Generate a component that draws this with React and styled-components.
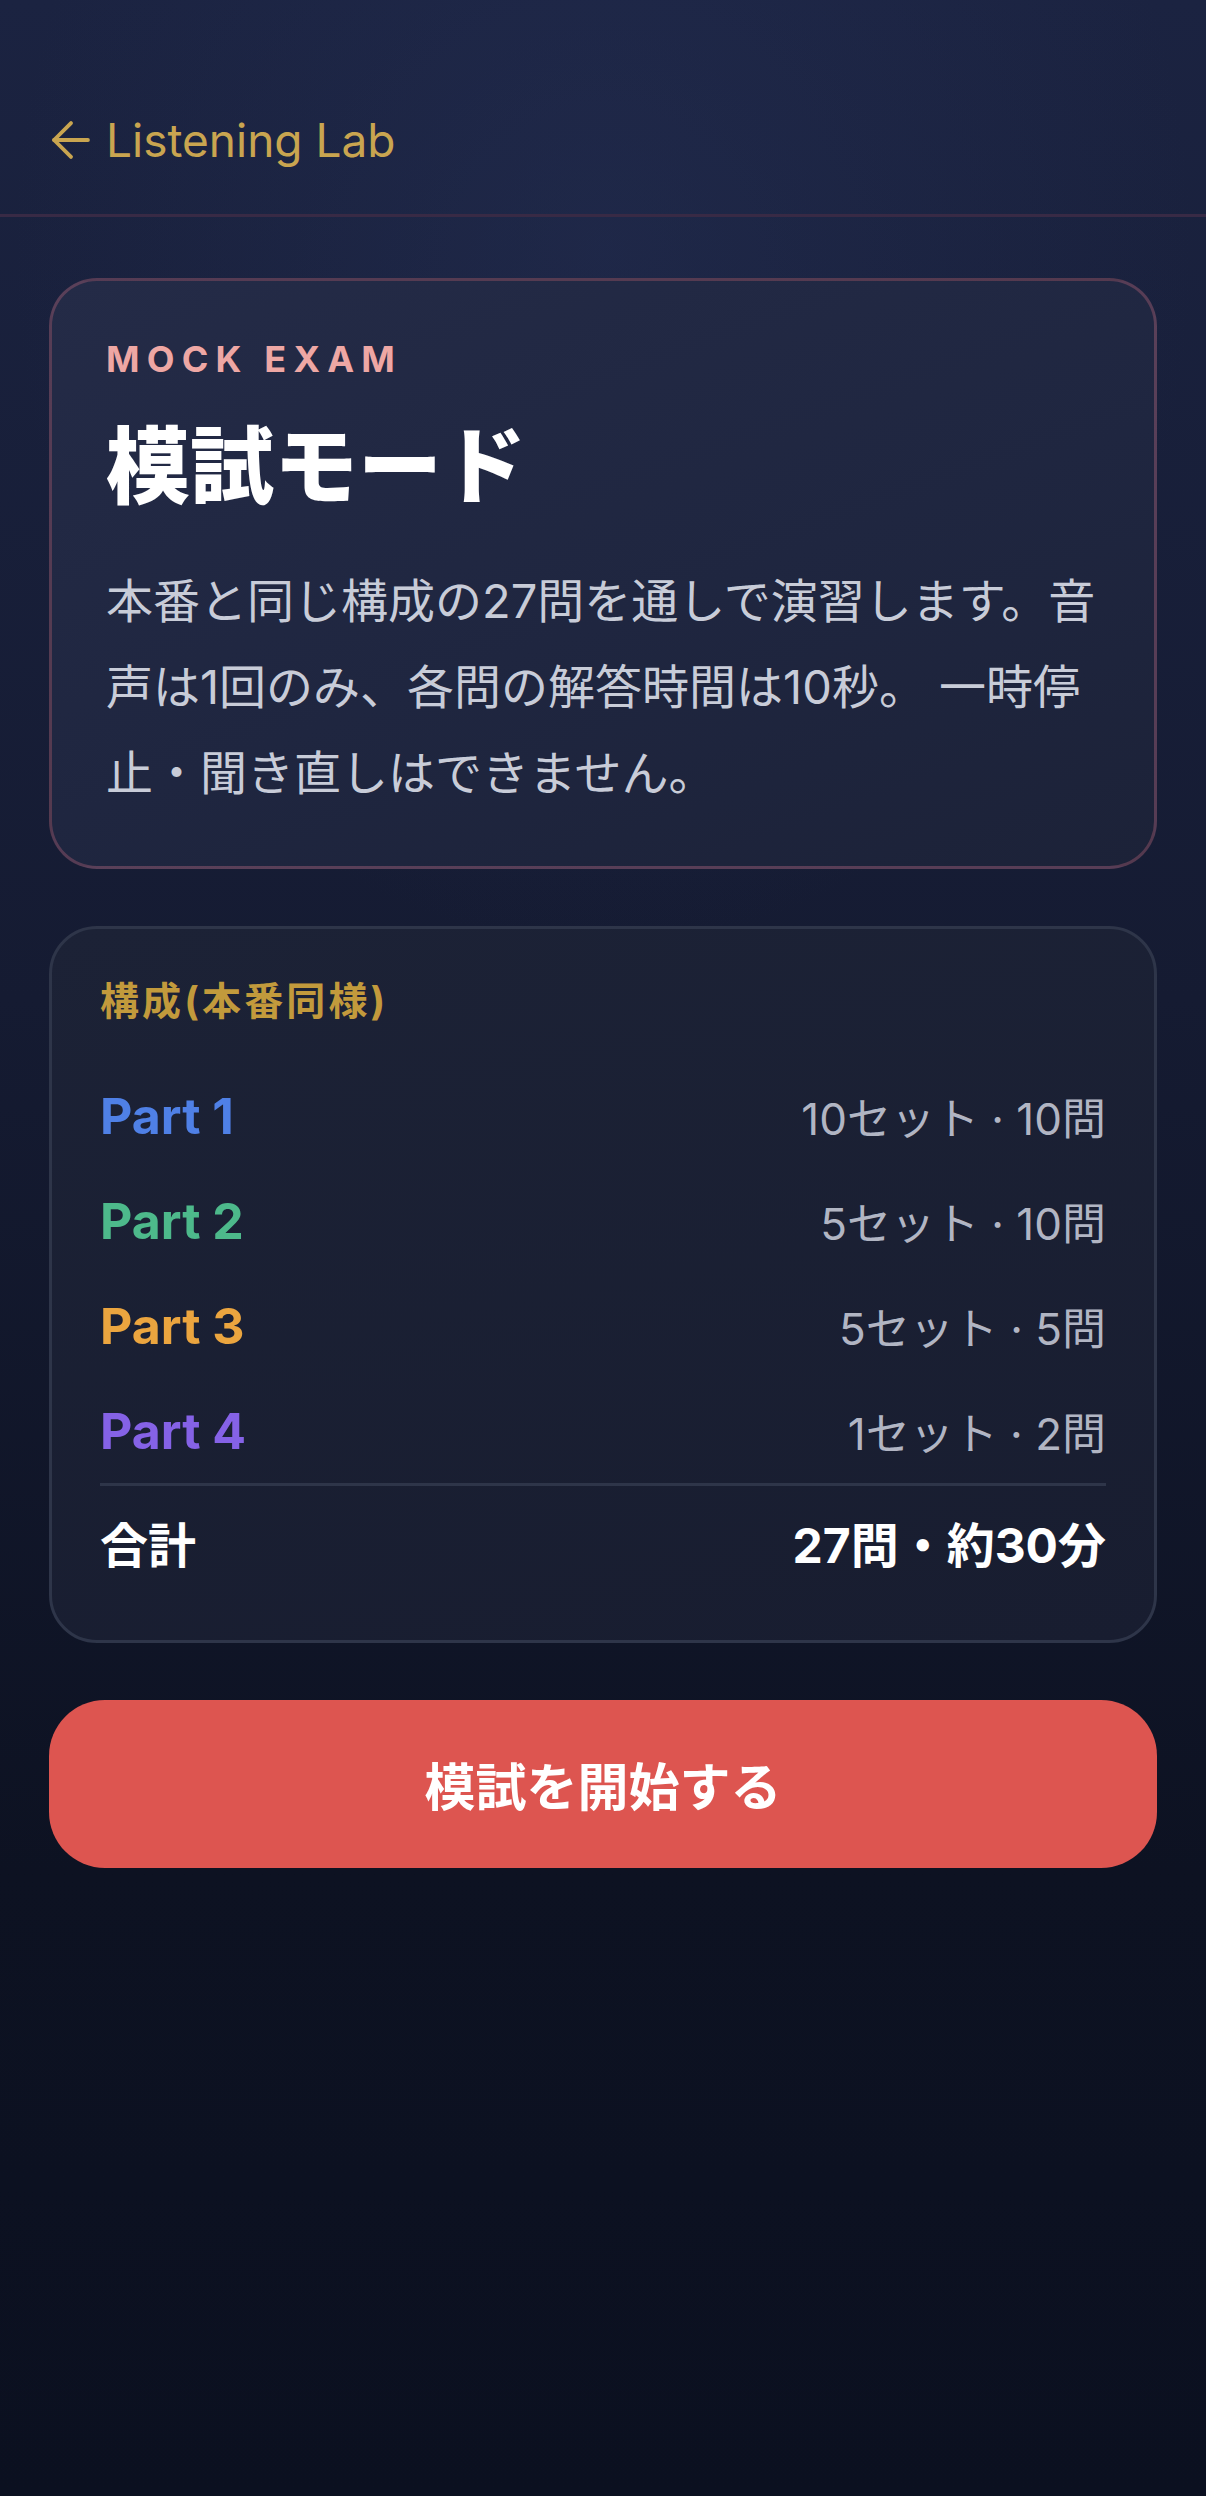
import React from 'react';
import styled, { createGlobalStyle } from 'styled-components';

const GlobalStyle = createGlobalStyle`
  html, body {
    margin: 0;
    padding: 0;
    background: #0c1120;
  }
  body {
    font-family: Inter, "Noto Sans CJK JP", "Noto Sans", sans-serif;
    -webkit-font-smoothing: antialiased;
  }
  * {
    box-sizing: border-box;
  }
`;

const Page = styled.div`
  min-height: 2496px;
  background:
    radial-gradient(ellipse 70% 40% at 50% 10%, rgba(40, 52, 92, 0.35), transparent 70%),
    linear-gradient(180deg, #1b2341 0%, #151b32 40%, #0d1222 75%, #0b1020 100%);
  color: #fff;
`;

const Header = styled.header`
  display: flex;
  align-items: center;
  padding: 110px 42px 44px;
  border-bottom: 3px solid #382a45;
`;

const BackLink = styled.a`
  display: flex;
  align-items: center;
  gap: 6px;
  color: #c9a550;
  font-size: 46px;
  line-height: 60px;
  text-decoration: none;
  cursor: pointer;
`;

const Main = styled.main`
  display: flex;
  flex-direction: column;
  gap: 57px;
  padding: 61px 49px 0;
`;

const IntroCard = styled.section`
  border: 3px solid rgba(214, 112, 132, 0.3);
  border-radius: 48px;
  padding: 57px 50px 50px 54px;
  background: linear-gradient(160deg, #242b47 0%, #1f2640 55%, #1c2238 100%);
`;

const Eyebrow = styled.div`
  color: #eea7a4;
  font-size: 36px;
  font-weight: 700;
  letter-spacing: 0.2em;
  line-height: 43px;
`;

const Title = styled.h1`
  margin: 31px 0 0;
  font-size: 84px;
  font-weight: 800;
  line-height: 109px;
  color: #fff;
`;

const Description = styled.p`
  margin: 37px 0 0;
  font-size: 47px;
  line-height: 86px;
  color: #c8ccd8;
`;

const PlanCard = styled.section`
  border: 3px solid #2e3549;
  border-radius: 48px;
  padding: 48px 48px 70px;
  background: linear-gradient(170deg, #1c2236 0%, #181d30 100%);
`;

const PlanHeading = styled.div`
  color: #c29a3c;
  font-size: 39px;
  font-weight: 700;
  letter-spacing: 0.08em;
  line-height: 48px;
  margin-bottom: 38px;
`;

const Row = styled.div`
  display: flex;
  justify-content: space-between;
  align-items: center;
  height: 105px;
`;

const PartName = styled.span`
  color: ${(p) => p.$color};
  font-size: 50px;
  font-weight: 700;
`;

const PartValue = styled.span`
  color: #b1b5c3;
  font-size: 44px;
`;

const TotalRow = styled.div`
  display: flex;
  justify-content: space-between;
  align-items: center;
  border-top: 3px solid #2e3549;
  padding-top: 36px;
  font-size: 48px;
  font-weight: 700;
  line-height: 48px;
  color: #fff;
`;

const StartButton = styled.button`
  height: 168px;
  border: none;
  border-radius: 56px;
  background: #dd5550;
  color: #fff;
  font-family: inherit;
  font-size: 51px;
  font-weight: 700;
  cursor: pointer;
`;

const ArrowLeft = () => (
  <svg width="58" height="58" viewBox="0 0 24 24" fill="none" stroke="currentColor" strokeWidth="1.6" strokeLinecap="round" strokeLinejoin="round">
    <path d="M19 12H5" />
    <path d="M12 19l-7-7 7-7" />
  </svg>
);

const parts = [
  { name: 'Part 1', color: '#4f80e6', value: '10セット · 10問' },
  { name: 'Part 2', color: '#4db98b', value: '5セット · 10問' },
  { name: 'Part 3', color: '#eba53f', value: '5セット · 5問' },
  { name: 'Part 4', color: '#8562e6', value: '1セット · 2問' },
];

export default function App() {
  return (
    <>
      <GlobalStyle />
      <Page>
        <Header>
          <BackLink>
            <ArrowLeft />
            Listening Lab
          </BackLink>
        </Header>
        <Main>
          <IntroCard>
            <Eyebrow>MOCK EXAM</Eyebrow>
            <Title>模試モード</Title>
            <Description>
              本番と同じ構成の27問を通しで演習します。音声は1回のみ、各問の解答時間は10秒。 一時停止・聞き直しはできません。
            </Description>
          </IntroCard>
          <PlanCard>
            <PlanHeading>構成(本番同様)</PlanHeading>
            {parts.map((part) => (
              <Row key={part.name}>
                <PartName $color={part.color}>{part.name}</PartName>
                <PartValue>{part.value}</PartValue>
              </Row>
            ))}
            <TotalRow>
              <span>合計</span>
              <span>27問・約30分</span>
            </TotalRow>
          </PlanCard>
          <StartButton>模試を開始する</StartButton>
        </Main>
      </Page>
    </>
  );
}
